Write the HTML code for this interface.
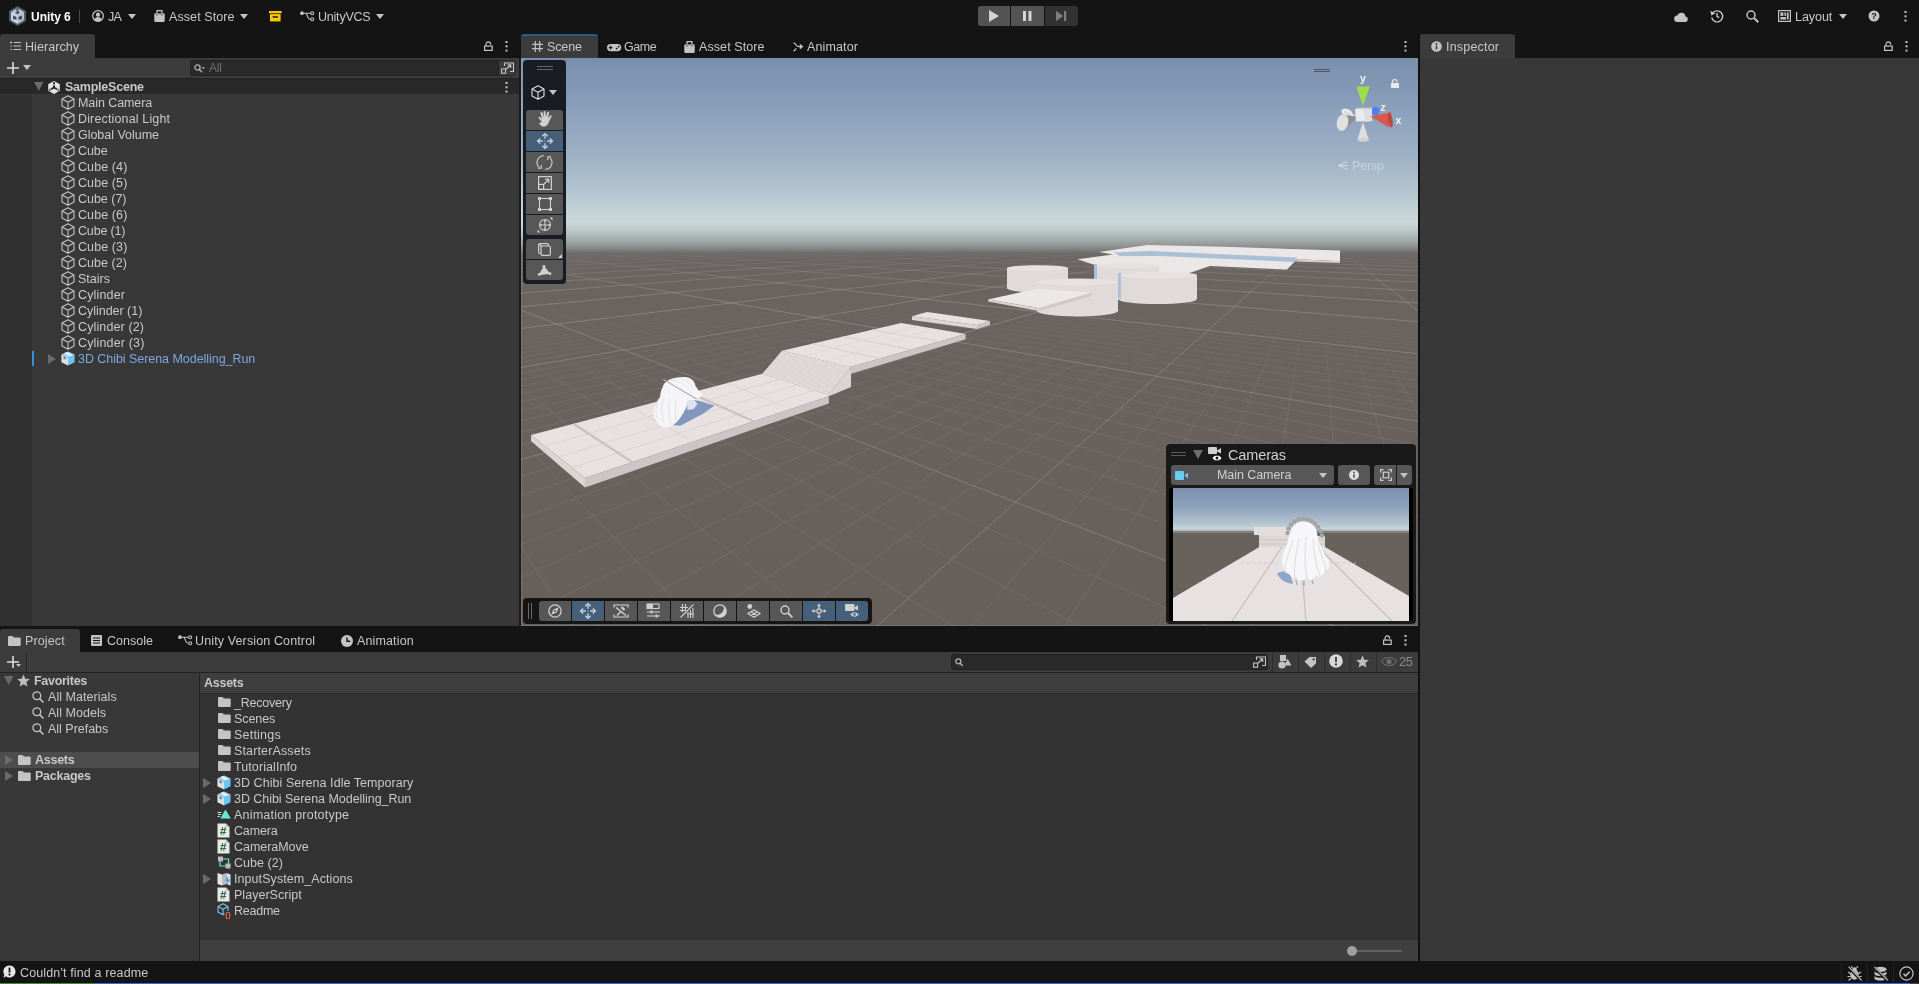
<!DOCTYPE html>
<html><head><meta charset="utf-8"><title>Unity 6</title><style>
*{box-sizing:border-box}
html,body{margin:0;padding:0}
body{width:1919px;height:984px;background:#141414;position:relative;overflow:hidden;font-family:"Liberation Sans",sans-serif;font-size:12.5px;color:#c8c8c8;}
.a{position:absolute}
.t{position:absolute;white-space:nowrap;line-height:16px;height:16px;will-change:transform}
.b{font-weight:bold}
svg{position:absolute;overflow:visible;will-change:transform}
.tab{position:absolute;background:#3c3c3c;border-radius:3px 3px 0 0}
.row{position:absolute;left:0;height:16px}
.btn{position:absolute;background:#585858;border-radius:2px}
.on{background:#46607c}
</style></head><body>
<div class="a" style="left:0px;top:0px;width:1919px;height:34px;background:#141414;"></div>
<svg style="left:9px;top:6px" width="17" height="20" viewBox="0 0 17 20" ><polygon points="8.500,0 17,5 17,15 8.500,20 0,15 0,5" fill="#4f5b68"/><polygon points="8.500,2.300 15,6.100 15,13.900 8.500,17.700 2,13.900 2,6.100" fill="#c3cad6"/><polygon points="8.500,10 15,6.300 15,13.900 8.500,17.700" fill="#b4bcc9"/><polygon points="8.500,10 2,6.300 2,13.900 8.500,17.700" fill="#cdd3de"/><path d="M7.500 2.400h2v3.600h1.700l-2.700 2.600l-2.700-2.600h1.700z" fill="#46525f"/><path d="M4.200 9.400l3.200 1.500v2.800l-1.800-.8l-1.400 1.200z" fill="#36414d"/><path d="M12.800 9.400l-3.200 1.500v2.800l1.800-.8l1.400 1.200z" fill="#36414d"/></svg>
<div class="t b" style="left:30.7px;top:9px;font-size:12px;letter-spacing:-0.036px;color:#fff">Unity 6</div>
<div class="a" style="left:79px;top:10px;width:1px;height:13px;background:#4a4a4a;"></div>
<svg style="left:92px;top:10px" width="12" height="12" viewBox="0 0 12 12" ><circle cx="6" cy="6" r="5.300" fill="none" stroke="#c4c4c4" stroke-width="1.300"/><circle cx="6" cy="4.700" r="2.100" fill="#c4c4c4"/><path d="M2.300 9.700c.7-2 2.100-2.700 3.700-2.700s3 .7 3.700 2.700c-1 1.100-2.300 1.700-3.700 1.700s-2.700-.6-3.700-1.700z" fill="#c4c4c4"/></svg>
<div class="t " style="left:108px;top:9px;font-size:12.5px;letter-spacing:-0.794px;">JA</div>
<svg style="left:128px;top:14px" width="8" height="5" viewBox="0 0 8 5" ><polygon points="0,0 8,0 4,5" fill="#c4c4c4"/></svg>
<svg style="left:153.5px;top:10px" width="11" height="12" viewBox="0 0 11 12" ><path d="M0.300 3.600h10.400v7.200a1.200 1.200 0 0 1-1.200 1.200h-8a1.200 1.200 0 0 1-1.200-1.200z" fill="#c4c4c4"/><path d="M3 4v-3.400h5v3.400" fill="none" stroke="#c4c4c4" stroke-width="1.200"/><path d="M2.300 4.300l.8 1l.8-1M7.100 4.300l.8 1l.8-1" fill="none" stroke="#141414" stroke-width=".7"/></svg>
<div class="t " style="left:169px;top:9px;font-size:12.5px;letter-spacing:0.087px;">Asset Store</div>
<svg style="left:240px;top:14px" width="8" height="5" viewBox="0 0 8 5" ><polygon points="0,0 8,0 4,5" fill="#c4c4c4"/></svg>
<svg style="left:268.8px;top:10.9px" width="13" height="11" viewBox="0 0 13 11" ><rect x="0" y="0" width="12.600" height="2.300" fill="#ffc800"/><rect x="1" y="3.100" width="10.600" height="7.300" fill="#ffc800"/><path d="M3.500 5.300h5.600v.5c0 .5-.4.900-.9.900h-3.800c-.5 0-.9-.4-.9-.9z" fill="#141414"/></svg>
<svg style="left:299.8px;top:10.9px" width="15" height="11" viewBox="0 0 15 11" ><circle cx="2" cy="2.200" r="1.900" fill="#c4c4c4"/><circle cx="12.200" cy="2.200" r="1.500" fill="none" stroke="#c4c4c4" stroke-width="1.100"/><circle cx="12.200" cy="8.300" r="1.500" fill="none" stroke="#c4c4c4" stroke-width="1.100"/><path d="M3.500 2.200h7.200M5.500 2.200c2.200 0 1.200 6.100 5.200 6.100" fill="none" stroke="#c4c4c4" stroke-width="1.100"/></svg>
<div class="t " style="left:317.5px;top:9px;font-size:12.5px;letter-spacing:-0.212px;">UnityVCS</div>
<svg style="left:376px;top:14px" width="8" height="5" viewBox="0 0 8 5" ><polygon points="0,0 8,0 4,5" fill="#c4c4c4"/></svg>
<div class="a" style="left:978px;top:6px;width:32px;height:20px;background:#535353;border-radius:3px 0 0 3px"></div>
<div class="a" style="left:1011px;top:6px;width:33px;height:20px;background:#535353;"></div>
<div class="a" style="left:1045px;top:6px;width:33px;height:20px;background:#323232;border-radius:0 3px 3px 0"></div>
<svg style="left:989px;top:10px" width="11" height="12" viewBox="0 0 11 12" ><polygon points="0,0 10,6 0,12" fill="#d2d2d2"/></svg>
<svg style="left:1023px;top:11px" width="9" height="10" viewBox="0 0 9 10" ><rect x="0" y="0" width="3" height="10" fill="#d2d2d2"/><rect x="5.500" y="0" width="3" height="10" fill="#d2d2d2"/></svg>
<svg style="left:1056px;top:11px" width="11" height="10" viewBox="0 0 11 10" ><polygon points="0,0 7.500,5 0,10" fill="#7e7e7e"/><rect x="8" y="0" width="2.200" height="10" fill="#7e7e7e"/></svg>
<svg style="left:1673.5px;top:11.5px" width="15" height="10" viewBox="0 0 15 10" ><path d="M3.500 10a3.200 3.200 0 0 1-.3-6.400a4.300 4.300 0 0 1 8.300.9a2.800 2.800 0 0 1 .2 5.500z" fill="#c4c4c4"/></svg>
<svg style="left:1710px;top:9px" width="14" height="14" viewBox="0 0 14 14" ><path d="M2.600 4.200a5.500 5.500 0 1 1-.9 4.300" fill="none" stroke="#c4c4c4" stroke-width="1.400"/><polygon points="0.400,1.800 1.200,6.400 5.300,4.600" fill="#c4c4c4"/><path d="M7 4v3.300l2.200 1.300" fill="none" stroke="#c4c4c4" stroke-width="1.400"/></svg>
<svg style="left:1746px;top:10px" width="13" height="13" viewBox="0 0 13 13" ><circle cx="5" cy="5" r="4" fill="none" stroke="#c4c4c4" stroke-width="1.500"/><path d="M8 8l4.300 4.300" stroke="#c4c4c4" stroke-width="2"/></svg>
<svg style="left:1778px;top:10px" width="13" height="12" viewBox="0 0 13 12" ><rect x=".6" y=".6" width="11.800" height="10.800" fill="none" stroke="#c4c4c4" stroke-width="1.200"/><rect x="2.400" y="2.400" width="3" height="3.500" fill="#c4c4c4"/><rect x="6.400" y="2.400" width="1.500" height="3.500" fill="#c4c4c4"/><rect x="8.800" y="2.400" width="1.800" height="7.200" fill="#c4c4c4"/><rect x="2.400" y="7" width="5.500" height="2.600" fill="#c4c4c4"/></svg>
<div class="t " style="left:1795.4px;top:9px;font-size:12.5px;letter-spacing:-0.046px;">Layout</div>
<svg style="left:1839px;top:14px" width="8" height="5" viewBox="0 0 8 5" ><polygon points="0,0 8,0 4,5" fill="#c4c4c4"/></svg>
<svg style="left:1868px;top:10px" width="12" height="12" viewBox="0 0 12 12" ><circle cx="6" cy="6" r="5.500" fill="#c4c4c4"/><text x="6" y="9.300" font-size="9" font-weight="bold" text-anchor="middle" fill="#141414" font-family="Liberation Sans,sans-serif">?</text></svg>
<svg style="left:1904px;top:11px" width="3" height="11" viewBox="0 0 3 11" ><rect x=".5" y="0" width="2" height="2" fill="#c4c4c4"/><rect x=".5" y="4.300" width="2" height="2" fill="#c4c4c4"/><rect x=".5" y="8.600" width="2" height="2" fill="#c4c4c4"/></svg>
<div class="a" style="left:0px;top:34px;width:95px;height:24px;background:#3c3c3c;border-radius:3px 3px 0 0"></div>
<svg style="left:10px;top:41px" width="11" height="10" viewBox="0 0 11 10" ><path d="M3.500 1.500h7.500M3.500 5h7.500M3.500 8.500h7.500" stroke="#c4c4c4" stroke-width="1.200"/><path d="M0 1.500h2M1 0.500v2M0.500 5h1.500M0.500 8.500h1.500" stroke="#c4c4c4" stroke-width="1"/></svg>
<div class="t " style="left:25px;top:38.5px;font-size:12.5px;letter-spacing:0.062px;">Hierarchy</div>
<svg style="left:484px;top:41px" width="9" height="10" viewBox="0 0 9 10" ><rect x=".6" y="5.100" width="7.600" height="4.300" fill="none" stroke="#c4c4c4" stroke-width="1.200"/><path d="M2 5v-1.800a2.300 2.300 0 0 1 4.600 0v.5" fill="none" stroke="#c4c4c4" stroke-width="1.200"/></svg>
<svg style="left:505px;top:41px" width="3" height="11" viewBox="0 0 3 11" ><rect x=".5" y="0" width="2" height="2" fill="#c4c4c4"/><rect x=".5" y="4.300" width="2" height="2" fill="#c4c4c4"/><rect x=".5" y="8.600" width="2" height="2" fill="#c4c4c4"/></svg>
<div class="a" style="left:0px;top:58px;width:519px;height:20px;background:#3c3c3c;"></div>
<svg style="left:7px;top:62px" width="12" height="12" viewBox="0 0 12 12" ><path d="M6 0v12M0 6h12" stroke="#dcdcdc" stroke-width="1.600"/></svg>
<svg style="left:23px;top:65px" width="8" height="5" viewBox="0 0 8 5" ><polygon points="0,0 8,0 4,5" fill="#c4c4c4"/></svg>
<div class="a" style="left:190px;top:60px;width:309px;height:16px;background:#2a2a2a;border:1px solid #212121;border-radius:3px 0 0 3px"></div>
<svg style="left:194px;top:64px" width="11" height="9" viewBox="0 0 11 9" ><circle cx="3.500" cy="3.500" r="2.600" fill="none" stroke="#b0b0b0" stroke-width="1.300"/><path d="M5.400 5.400l2.600 2.800" stroke="#b0b0b0" stroke-width="1.400"/><polygon points="7.500,3.200 11,3.200 9.200,5.200" fill="#b0b0b0"/></svg>
<div class="t " style="left:209px;top:60px;font-size:12px;letter-spacing:-0.172px;color:#6e6e6e">All</div>
<div class="a" style="left:499px;top:60px;width:17px;height:16px;background:#3c3c3c;border:1px solid #2a2a2a;border-left:none;border-radius:0 3px 3px 0"></div>
<svg style="left:501px;top:62px" width="13" height="12" viewBox="0 0 13 12" ><path d="M3.500 4v-3h9v8.500h-3.500" fill="none" stroke="#c4c4c4" stroke-width="1.100"/><rect x=".6" y="7" width="4" height="4.200" fill="none" stroke="#c4c4c4" stroke-width="1.100"/><path d="M4.500 7.500l5-4.500M6.500 2.800h3.200v3.200" fill="none" stroke="#c4c4c4" stroke-width="1.100"/></svg>
<div class="a" style="left:0px;top:78px;width:519px;height:1px;background:#232323;"></div>
<div class="a" style="left:0px;top:79px;width:519px;height:15px;background:#282828;"></div>
<div class="a" style="left:0px;top:94px;width:519px;height:1px;background:#3a3a3a;"></div>
<div class="a" style="left:0px;top:95px;width:32px;height:531px;background:#303030;"></div>
<div class="a" style="left:32px;top:95px;width:487px;height:531px;background:#383838;"></div>
<svg style="left:34px;top:82px" width="10" height="9" viewBox="0 0 10 9" ><polygon points="0,0 9.500,0 4.750,9" fill="#6a6a6a"/></svg>
<svg style="left:48px;top:80.5px" width="12" height="13" viewBox="0 0 12 13" ><polygon points="6,0 11.800,3.300 11.800,9.700 6,13 0.200,9.700 0.200,3.300" fill="#e6e6e6"/><path d="M6 6.500V1.200M6 6.500L1.300 9.200M6 6.500l4.700 2.700" stroke="#282828" stroke-width="2" fill="none"/><path d="M4.600 3.300l1.400.8l1.400-.8M2 6.400v1.600l1.400.8M10 6.400v1.600l-1.400.8" stroke="#e6e6e6" stroke-width="1" fill="none"/></svg>
<div class="t b" style="left:65px;top:78.5px;font-size:12.5px;letter-spacing:-0.230px;">SampleScene</div>
<svg style="left:505px;top:82px" width="3" height="11" viewBox="0 0 3 11" ><rect x=".5" y="0" width="2" height="2" fill="#c4c4c4"/><rect x=".5" y="4.300" width="2" height="2" fill="#c4c4c4"/><rect x=".5" y="8.600" width="2" height="2" fill="#c4c4c4"/></svg>
<svg style="left:61px;top:95.0px" width="14" height="15" viewBox="0 0 14 15" ><path d="M7 .8l6 3.200v7l-6 3.200l-6-3.200v-7z M1 4l6 3.200l6-3.200M7 7.200v7" fill="none" stroke="#c4c4c4" stroke-width="1.100" stroke-linejoin="round"/></svg>
<div class="t " style="left:78px;top:94.5px;font-size:12.5px;letter-spacing:-0.073px;">Main Camera</div>
<svg style="left:61px;top:111.0px" width="14" height="15" viewBox="0 0 14 15" ><path d="M7 .8l6 3.200v7l-6 3.200l-6-3.200v-7z M1 4l6 3.200l6-3.200M7 7.200v7" fill="none" stroke="#c4c4c4" stroke-width="1.100" stroke-linejoin="round"/></svg>
<div class="t " style="left:78px;top:110.5px;font-size:12.5px;letter-spacing:0.147px;">Directional Light</div>
<svg style="left:61px;top:127.0px" width="14" height="15" viewBox="0 0 14 15" ><path d="M7 .8l6 3.200v7l-6 3.200l-6-3.200v-7z M1 4l6 3.200l6-3.200M7 7.200v7" fill="none" stroke="#c4c4c4" stroke-width="1.100" stroke-linejoin="round"/></svg>
<div class="t " style="left:78px;top:126.5px;font-size:12.5px;letter-spacing:-0.026px;">Global Volume</div>
<svg style="left:61px;top:143.0px" width="14" height="15" viewBox="0 0 14 15" ><path d="M7 .8l6 3.200v7l-6 3.200l-6-3.200v-7z M1 4l6 3.200l6-3.200M7 7.200v7" fill="none" stroke="#c4c4c4" stroke-width="1.100" stroke-linejoin="round"/></svg>
<div class="t " style="left:78px;top:142.5px;font-size:12.5px;letter-spacing:-0.064px;">Cube</div>
<svg style="left:61px;top:159.0px" width="14" height="15" viewBox="0 0 14 15" ><path d="M7 .8l6 3.200v7l-6 3.200l-6-3.200v-7z M1 4l6 3.200l6-3.200M7 7.200v7" fill="none" stroke="#c4c4c4" stroke-width="1.100" stroke-linejoin="round"/></svg>
<div class="t " style="left:78px;top:158.5px;font-size:12.5px;letter-spacing:0.094px;">Cube (4)</div>
<svg style="left:61px;top:175.0px" width="14" height="15" viewBox="0 0 14 15" ><path d="M7 .8l6 3.200v7l-6 3.200l-6-3.200v-7z M1 4l6 3.200l6-3.200M7 7.200v7" fill="none" stroke="#c4c4c4" stroke-width="1.100" stroke-linejoin="round"/></svg>
<div class="t " style="left:78px;top:174.5px;font-size:12.5px;letter-spacing:0.094px;">Cube (5)</div>
<svg style="left:61px;top:191.0px" width="14" height="15" viewBox="0 0 14 15" ><path d="M7 .8l6 3.200v7l-6 3.200l-6-3.200v-7z M1 4l6 3.200l6-3.200M7 7.200v7" fill="none" stroke="#c4c4c4" stroke-width="1.100" stroke-linejoin="round"/></svg>
<div class="t " style="left:78px;top:190.5px;font-size:12.5px;letter-spacing:-0.020px;">Cube (7)</div>
<svg style="left:61px;top:207.0px" width="14" height="15" viewBox="0 0 14 15" ><path d="M7 .8l6 3.200v7l-6 3.200l-6-3.200v-7z M1 4l6 3.200l6-3.200M7 7.200v7" fill="none" stroke="#c4c4c4" stroke-width="1.100" stroke-linejoin="round"/></svg>
<div class="t " style="left:78px;top:206.5px;font-size:12.5px;letter-spacing:0.094px;">Cube (6)</div>
<svg style="left:61px;top:223.0px" width="14" height="15" viewBox="0 0 14 15" ><path d="M7 .8l6 3.200v7l-6 3.200l-6-3.200v-7z M1 4l6 3.200l6-3.200M7 7.200v7" fill="none" stroke="#c4c4c4" stroke-width="1.100" stroke-linejoin="round"/></svg>
<div class="t " style="left:78px;top:222.5px;font-size:12.5px;letter-spacing:-0.163px;">Cube (1)</div>
<svg style="left:61px;top:239.0px" width="14" height="15" viewBox="0 0 14 15" ><path d="M7 .8l6 3.200v7l-6 3.200l-6-3.200v-7z M1 4l6 3.200l6-3.200M7 7.200v7" fill="none" stroke="#c4c4c4" stroke-width="1.100" stroke-linejoin="round"/></svg>
<div class="t " style="left:78px;top:238.5px;font-size:12.5px;letter-spacing:0.094px;">Cube (3)</div>
<svg style="left:61px;top:255.0px" width="14" height="15" viewBox="0 0 14 15" ><path d="M7 .8l6 3.200v7l-6 3.200l-6-3.200v-7z M1 4l6 3.200l6-3.200M7 7.200v7" fill="none" stroke="#c4c4c4" stroke-width="1.100" stroke-linejoin="round"/></svg>
<div class="t " style="left:78px;top:254.5px;font-size:12.5px;letter-spacing:0.051px;">Cube (2)</div>
<svg style="left:61px;top:271.0px" width="14" height="15" viewBox="0 0 14 15" ><path d="M7 .8l6 3.200v7l-6 3.200l-6-3.200v-7z M1 4l6 3.200l6-3.200M7 7.200v7" fill="none" stroke="#c4c4c4" stroke-width="1.100" stroke-linejoin="round"/></svg>
<div class="t " style="left:78px;top:270.5px;font-size:12.5px;letter-spacing:0.009px;">Stairs</div>
<svg style="left:61px;top:287.0px" width="14" height="15" viewBox="0 0 14 15" ><path d="M7 .8l6 3.200v7l-6 3.200l-6-3.200v-7z M1 4l6 3.200l6-3.200M7 7.200v7" fill="none" stroke="#c4c4c4" stroke-width="1.100" stroke-linejoin="round"/></svg>
<div class="t " style="left:78px;top:286.5px;font-size:12.5px;letter-spacing:0.163px;">Cylinder</div>
<svg style="left:61px;top:303.0px" width="14" height="15" viewBox="0 0 14 15" ><path d="M7 .8l6 3.200v7l-6 3.200l-6-3.200v-7z M1 4l6 3.200l6-3.200M7 7.200v7" fill="none" stroke="#c4c4c4" stroke-width="1.100" stroke-linejoin="round"/></svg>
<div class="t " style="left:78px;top:302.5px;font-size:12.5px;letter-spacing:-0.028px;">Cylinder (1)</div>
<svg style="left:61px;top:319.0px" width="14" height="15" viewBox="0 0 14 15" ><path d="M7 .8l6 3.200v7l-6 3.200l-6-3.200v-7z M1 4l6 3.200l6-3.200M7 7.200v7" fill="none" stroke="#c4c4c4" stroke-width="1.100" stroke-linejoin="round"/></svg>
<div class="t " style="left:78px;top:318.5px;font-size:12.5px;letter-spacing:0.126px;">Cylinder (2)</div>
<svg style="left:61px;top:335.0px" width="14" height="15" viewBox="0 0 14 15" ><path d="M7 .8l6 3.200v7l-6 3.200l-6-3.200v-7z M1 4l6 3.200l6-3.200M7 7.200v7" fill="none" stroke="#c4c4c4" stroke-width="1.100" stroke-linejoin="round"/></svg>
<div class="t " style="left:78px;top:334.5px;font-size:12.5px;letter-spacing:0.154px;">Cylinder (3)</div>
<div class="a" style="left:32px;top:351px;width:2px;height:15px;background:#3a8fd6;"></div>
<svg style="left:48px;top:353.5px" width="8" height="10" viewBox="0 0 8 10" ><polygon points="0,0 8,5 0,10" fill="#6a6a6a"/></svg>
<svg style="left:61px;top:351.0px" width="14" height="15" viewBox="0 0 14 15" ><polygon points="7,0.500 13.600,3.600 7,6.900 0.400,3.600" fill="#9bdcfb"/><polygon points="3.300,2.100 5.300,1.200 11.900,4.500 9.900,5.500" fill="#f4f8fb"/><polygon points="0.400,3.600 7,6.900 7,14.600 0.400,11.200" fill="#dde1e5"/><polygon points="13.600,3.600 7,6.900 7,14.600 13.600,11.200" fill="#6cc6f4"/><polygon points="2.600,5.200 4.600,6.200 4.600,9 3.600,8 2.600,8.300" fill="#6d7379"/></svg>
<div class="t " style="left:78px;top:350.5px;font-size:12.5px;letter-spacing:-0.046px;color:#7ba7e1;">3D Chibi Serena Modelling_Run</div>
<div class="a" style="left:519px;top:58px;width:2px;height:568px;background:#191919;"></div>
<div class="a" style="left:521px;top:34px;width:77px;height:24px;background:#3c3c3c;border-radius:3px 3px 0 0;border-top:2px solid #2c5d87"></div>
<svg style="left:532px;top:41px" width="11" height="11" viewBox="0 0 11 11" ><path d="M3.300 0v11M7.700 0v11M0 3.300h11M0 7.700h11" stroke="#c4c4c4" stroke-width="1.200"/></svg>
<div class="t " style="left:547px;top:38.5px;font-size:12.5px;letter-spacing:-0.113px;">Scene</div>
<svg style="left:607px;top:43.6px" width="15" height="8" viewBox="0 0 15 8" ><rect x="0" y="0" width="14.200" height="7.200" rx="3.600" fill="#c4c4c4"/><path d="M3.600 1.800v3.600M1.800 3.600h3.600" stroke="#141414" stroke-width="1.100"/><circle cx="9.600" cy="4.600" r=".9" fill="#141414"/><circle cx="11.600" cy="2.700" r=".9" fill="#141414"/></svg>
<div class="t " style="left:624px;top:38.5px;font-size:12.5px;letter-spacing:-0.416px;">Game</div>
<svg style="left:683.6px;top:41.2px" width="11" height="12" viewBox="0 0 11 12" ><path d="M0.300 3.600h10.400v7.200a1.200 1.200 0 0 1-1.200 1.200h-8a1.200 1.200 0 0 1-1.200-1.200z" fill="#c4c4c4"/><path d="M3 4v-3.400h5v3.400" fill="none" stroke="#c4c4c4" stroke-width="1.200"/><path d="M2.300 4.300l.8 1l.8-1M7.100 4.300l.8 1l.8-1" fill="none" stroke="#141414" stroke-width=".7"/></svg>
<div class="t " style="left:699px;top:38.5px;font-size:12.5px;letter-spacing:0.087px;">Asset Store</div>
<svg style="left:792.5px;top:41.8px" width="11" height="10" viewBox="0 0 11 10" ><path d="M0.500 0.800c1.200 0 2 1 2.800 2.400s1.500 1.400 2.700 1.400h3M0.500 8.800c1.200 0 2-1 2.800-2.400" fill="none" stroke="#c4c4c4" stroke-width="1.200"/><polygon points="6.800,1.800 10.500,4.600 6.800,7.400" fill="#c4c4c4"/></svg>
<div class="t " style="left:807px;top:38.5px;font-size:12.5px;letter-spacing:0.138px;">Animator</div>
<svg style="left:1404px;top:41px" width="3" height="11" viewBox="0 0 3 11" ><rect x=".5" y="0" width="2" height="2" fill="#c4c4c4"/><rect x=".5" y="4.300" width="2" height="2" fill="#c4c4c4"/><rect x=".5" y="8.600" width="2" height="2" fill="#c4c4c4"/></svg>
<svg style="left:521px;top:58px" width="897" height="568" viewBox="521 58 897 568"><defs><linearGradient id="sky" gradientUnits="userSpaceOnUse" x1="0" y1="58" x2="0" y2="262"><stop offset="0.0000" stop-color="#7a8fae"/><stop offset="0.1569" stop-color="#8398b4"/><stop offset="0.3039" stop-color="#8fa4bd"/><stop offset="0.4804" stop-color="#9db1c6"/><stop offset="0.6618" stop-color="#b5c5d0"/><stop offset="0.7451" stop-color="#c3d1d6"/><stop offset="0.8039" stop-color="#cbd8d9"/><stop offset="0.8529" stop-color="#b9c4c4"/><stop offset="0.8922" stop-color="#a3abab"/><stop offset="0.9216" stop-color="#8e9393"/><stop offset="0.9412" stop-color="#7d7e7d"/><stop offset="0.9559" stop-color="#6e6a69"/><stop offset="0.9804" stop-color="#6b6664"/><stop offset="1.0000" stop-color="#6a6562"/></linearGradient><linearGradient id="gnd" gradientUnits="userSpaceOnUse" x1="0" y1="262" x2="0" y2="626"><stop offset="0" stop-color="#6a6562"/><stop offset=".5" stop-color="#68615c"/><stop offset="1" stop-color="#67605a"/></linearGradient><linearGradient id="gfade" gradientUnits="userSpaceOnUse" x1="0" y1="295" x2="0" y2="420"><stop offset="0" stop-color="#fff" stop-opacity="0"/><stop offset=".5" stop-color="#fff" stop-opacity=".6"/><stop offset="1" stop-color="#fff" stop-opacity="1"/></linearGradient><linearGradient id="gfade2" gradientUnits="userSpaceOnUse" x1="0" y1="250" x2="0" y2="300"><stop offset="0" stop-color="#fff" stop-opacity="0"/><stop offset=".4" stop-color="#fff" stop-opacity=".55"/><stop offset="1" stop-color="#fff" stop-opacity="1"/></linearGradient><mask id="gm" maskUnits="userSpaceOnUse" x="521" y="58" width="897" height="568"><rect x="521" y="58" width="897" height="568" fill="url(#gfade)"/></mask><mask id="gm2" maskUnits="userSpaceOnUse" x="521" y="58" width="897" height="568"><rect x="521" y="58" width="897" height="568" fill="url(#gfade2)"/></mask><clipPath id="sc"><rect x="521" y="58" width="897" height="568"/></clipPath></defs><g clip-path="url(#sc)"><rect x="521" y="58" width="897" height="204" fill="url(#sky)"/><rect x="521" y="262" width="897" height="364" fill="url(#gnd)"/><g mask="url(#gm)" fill="none"><path d="M129048.3 7447L1415.4 237.5M127329.3 7447L1413.9 237.5M125610.2 7447L1412.5 237.5M123891.2 7447L1411.1 237.5M122172.1 7447L1409.6 237.5M120453.1 7447L1408.2 237.5M118734 7447L1406.8 237.5M117015 7447L1405.4 237.4M115295.9 7447L1404 237.4M111857.8 7447L1401.2 237.4M110138.7 7447L1399.8 237.4M108419.7 7447L1398.4 237.4M106700.6 7447L1397 237.4M104981.6 7447L1395.6 237.4M103262.5 7447L1394.2 237.4M101543.5 7447L1392.8 237.4M99824.4 7447L1391.4 237.4M98105.4 7447L1390.1 237.4M94667.2 7447L1387.3 237.4M92948.2 7447L1386 237.4M91229.1 7447L1384.6 237.3M89510.1 7447L1383.3 237.3M87791 7447L1381.9 237.3M86072 7447L1380.5 237.3M84352.9 7447L1379.2 237.3M82633.9 7447L1377.9 237.3M80914.8 7447L1376.5 237.3M77476.7 7447L1373.9 237.3M75757.6 7447L1372.5 237.3M74038.6 7447L1371.2 237.3M72319.5 7447L1369.9 237.3M70600.5 7447L1368.6 237.3M68881.4 7447L1367.2 237.3M67162.4 7447L1365.9 237.3M65443.3 7447L1364.6 237.2M63724.3 7447L1363.3 237.2M60286.1 7447L1360.7 237.2M58567.1 7447L1359.4 237.2M56848 7447L1358.1 237.2M55129 7447L1356.8 237.2M53409.9 7447L1355.5 237.2M51690.9 7447L1354.3 237.2M49971.8 7447L1353 237.2M48252.8 7447L1351.7 237.2M46533.7 7447L1350.4 237.2M43095.6 7447L1347.9 237.2M41376.5 7447L1346.6 237.2M39657.5 7447L1345.4 237.1M37938.4 7447L1344.1 237.1M36219.4 7447L1342.8 237.1M34500.3 7447L1341.6 237.1M32781.3 7447L1340.3 237.1M31062.2 7447L1339.1 237.1M29343.2 7447L1337.9 237.1M25905 7447L1335.4 237.1M24186 7447L1334.1 237.1M22466.9 7447L1332.9 237.1M20747.9 7447L1331.7 237.1M19028.8 7447L1330.5 237.1M17309.8 7447L1329.2 237.1M15590.7 7447L1328 237.1M13871.7 7447L1326.8 237.1M12152.6 7447L1325.6 237M8714.5 7447L1323.2 237M6995.4 7447L1322 237M5276.4 7447L1320.8 237M3557.3 7447L1319.6 237M1838.3 7447L1318.4 237M119.2 7447L1317.2 237M-1599.8 7447L1316 237M-3318.9 7447L1314.8 237M-5037.9 7447L1313.6 237M-2189.3 2815.7L1311.2 237M-1232 1830L1310.1 237M-803.4 1388.7L1308.9 237M-560.3 1138.4L1307.7 237M-403.7 977.2L1306.6 237M-294.4 864.6L1305.4 236.9M-213.8 781.6L1304.2 236.9M-151.9 717.9L1303.1 236.9M-102.8 667.4L1301.9 236.9M-30.1 592.4L1299.6 236.9M-2.3 563.9L1298.5 236.9M21.3 539.5L1297.3 236.9M41.8 518.5L1296.2 236.9M59.6 500.1L1295 236.9M75.3 484L1293.9 236.9M89.1 469.7L1292.8 236.9M101.5 456.9L1291.6 236.9M112.7 445.5L1290.5 236.9M131.9 425.7L1288.2 236.9M140.2 417.2L1287.1 236.9M147.8 409.3L1286 236.9M154.8 402.1L1284.9 236.8M161.2 395.5L1283.8 236.8M167.2 389.3L1282.6 236.8M172.7 383.6L1281.5 236.8M177.9 378.3L1280.4 236.8M182.7 373.4L1279.3 236.8M191.4 364.5L1277.1 236.8M195.3 360.4L1276 236.8M199 356.6L1274.9 236.8M202.5 353L1273.8 236.8M205.8 349.6L1272.8 236.8M208.9 346.4L1271.7 236.8M211.9 343.3L1270.6 236.8M214.7 340.5L1269.5 236.8M217.3 337.7L1268.4 236.8M222.3 332.6L1266.3 236.8M224.6 330.3L1265.2 236.7M226.7 328L1264.1 236.7M228.8 325.9L1263.1 236.7M230.8 323.8L1262 236.7M232.7 321.8L1260.9 236.7M234.6 320L1259.9 236.7M236.3 318.1L1258.8 236.7M238 316.4L1257.8 236.7M241.2 313.1L1255.7 236.7M242.7 311.6L1254.6 236.7M244.1 310.1L1253.6 236.7M245.5 308.7L1252.5 236.7M246.9 307.3L1251.5 236.7M248.2 306L1250.4 236.7M249.4 304.7L1249.4 236.7M250.6 303.5L1248.4 236.7M251.8 302.3L1247.3 236.7M254 300L1245.3 236.6M255 298.9L1244.3 236.6M256.1 297.8L1243.2 236.6M257 296.8L1242.2 236.6M258 295.8L1241.2 236.6M258.9 294.9L1240.2 236.6M259.8 293.9L1239.2 236.6M260.7 293L1238.2 236.6M261.6 292.2L1237.1 236.6M263.2 290.5L1235.1 236.6M264 289.7L1234.1 236.6M264.7 288.9L1233.1 236.6M265.5 288.1L1232.1 236.6M266.2 287.4L1231.1 236.6M266.9 286.7L1230.1 236.6M267.6 286L1229.1 236.6M268.3 285.3L1228.2 236.6M268.9 284.6L1227.2 236.6M270.2 283.3L1225.2 236.5M270.8 282.7L1224.2 236.5M271.4 282.1L1223.2 236.5M271.9 281.5L1222.3 236.5M272.5 280.9L1221.3 236.5M273 280.4L1220.3 236.5M273.6 279.8L1219.3 236.5M274.1 279.3L1218.4 236.5M274.6 278.7L1217.4 236.5M275.6 277.7L1215.5 236.5M276.1 277.2L1214.5 236.5M276.5 276.7L1213.6 236.5M277 276.3L1212.6 236.5M277.5 275.8L1211.7 236.5M277.9 275.4L1210.7 236.5M278.3 274.9L1209.8 236.5M278.8 274.5L1208.8 236.5M279.2 274L1207.9 236.5M280 273.2L1206 236.4M280.4 272.8L1205 236.4M280.7 272.4L1204.1 236.4M281.1 272L1203.2 236.4M281.5 271.7L1202.2 236.4M281.8 271.3L1201.3 236.4M282.2 270.9L1200.4 236.4M282.5 270.6L1199.4 236.4M282.9 270.2L1198.5 236.4M283.6 269.5L1196.7 236.4M283.9 269.2L1195.7 236.4M284.2 268.9L1194.8 236.4M284.5 268.5L1193.9 236.4M284.8 268.2L1193 236.4M285.1 267.9L1192.1 236.4M285.4 267.6L1191.2 236.4M285.7 267.3L1190.3 236.4M286 267L1189.4 236.4M286.6 266.4L1187.5 236.4M286.8 266.2L1186.6 236.4M287.1 265.9L1185.7 236.3M287.4 265.6L1184.9 236.3M287.6 265.3L1184 236.3M287.9 265.1L1183.1 236.3M288.1 264.8L1182.2 236.3M288.4 264.6L1181.3 236.3M288.6 264.3L1180.4 236.3M289.1 263.8L1178.6 236.3M289.3 263.6L1177.7 236.3M289.6 263.3L1176.9 236.3M289.8 263.1L1176 236.3M290 262.9L1175.1 236.3M290.2 262.7L1174.2 236.3M290.4 262.4L1173.4 236.3M290.7 262.2L1172.5 236.3M290.9 262L1171.6 236.3M-6687.1 7447L316.6 235.5M-2036.5 7447L318.9 235.5M288.9 7447L320 235.5M2614.2 7447L321.1 235.5M4939.6 7447L322.2 235.5M7264.9 7447L323.3 235.5M9590.2 7447L324.4 235.5M11915.6 7447L325.6 235.5M14240.9 7447L326.7 235.5M16566.3 7447L327.8 235.4M21216.9 7447L330 235.4M23542.3 7447L331.1 235.4M25867.6 7447L332.2 235.4M28193 7447L333.3 235.4M30518.3 7447L334.3 235.4M32843.6 7447L335.4 235.4M35169 7447L336.5 235.4M37494.3 7447L337.6 235.4M39819.7 7447L338.7 235.4M11088.4 1991.8L340.8 235.4M7547.9 1354.1L341.9 235.4M5890.9 1055.6L343 235.4M4930.1 882.6L344 235.4M4303 769.6L345.1 235.4M3861.4 690.1L346.2 235.4M3533.6 631.1L347.2 235.4M3280.7 585.5L348.3 235.4M3079.6 549.3L349.4 235.4M2780 495.3L351.5 235.4M2665.4 474.7L352.5 235.4M2567.5 457L353.6 235.4M2482.8 441.8L354.6 235.4M2408.9 428.5L355.6 235.4M2343.8 416.8L356.7 235.3M2286.1 406.4L357.7 235.3M2234.5 397.1L358.8 235.3M2188.1 388.7L359.8 235.3M2108.1 374.3L361.9 235.3M2073.4 368.1L362.9 235.3M2041.6 362.3L363.9 235.3M2012.4 357.1L364.9 235.3M1985.4 352.2L366 235.3M1960.5 347.7L367 235.3M1937.3 343.5L368 235.3M1915.8 339.7L369 235.3M1895.7 336.1L370 235.3M1859.3 329.5L372 235.3M1842.8 326.5L373 235.3M1827.3 323.7L374 235.3M1812.6 321.1L375 235.3M1798.8 318.6L376 235.3M1785.7 316.2L377 235.3M1773.3 314L378 235.3M1761.6 311.9L379 235.3M1750.4 309.9L380 235.3M1729.7 306.2L382 235.3M1720.1 304.4L383 235.3M1710.9 302.8L384 235.3M1702.1 301.2L384.9 235.3M1693.7 299.7L385.9 235.2M1685.7 298.2L386.9 235.2M1678 296.8L387.9 235.2M1670.6 295.5L388.8 235.2M1663.5 294.2L389.8 235.2M1650.2 291.8L391.7 235.2M1643.9 290.7L392.7 235.2M1637.8 289.6L393.7 235.2M1632 288.5L394.6 235.2M1626.3 287.5L395.6 235.2M1620.9 286.6L396.5 235.2M1615.7 285.6L397.5 235.2M1610.6 284.7L398.5 235.2M1605.7 283.8L399.4 235.2M1596.4 282.1L401.3 235.2M1591.9 281.3L402.2 235.2M1587.6 280.6L403.2 235.2M1583.5 279.8L404.1 235.2M1579.4 279.1L405.1 235.2M1575.5 278.4L406 235.2M1571.7 277.7L406.9 235.2M1568 277L407.9 235.2M1564.5 276.4L408.8 235.2M1557.6 275.2L410.7 235.2M1554.3 274.6L411.6 235.2M1551.1 274L412.5 235.2M1548 273.4L413.4 235.2M1544.9 272.9L414.3 235.1M1542 272.3L415.3 235.1M1539.1 271.8L416.2 235.1M1536.3 271.3L417.1 235.1M1533.6 270.8L418 235.1M1528.3 269.9L419.8 235.1M1525.7 269.4L420.7 235.1M1523.3 269L421.6 235.1M1520.8 268.5L422.5 235.1M1518.5 268.1L423.4 235.1M1516.2 267.7L424.3 235.1M1513.9 267.3L425.2 235.1M1511.7 266.9L426.1 235.1M1509.5 266.5L427 235.1M1505.4 265.7L428.8 235.1M1503.3 265.4L429.7 235.1M1501.4 265L430.6 235.1M1499.4 264.7L431.5 235.1M1497.5 264.3L432.4 235.1M1495.7 264L433.2 235.1M1493.9 263.7L434.1 235.1M1492.1 263.4L435 235.1M1490.3 263L435.9 235.1M1487 262.4L437.6 235.1M1485.3 262.1L438.5 235.1" stroke="#9b9690" stroke-opacity=".24" stroke-width="1"/></g><g mask="url(#gm2)" fill="none"><path d="M130767.4 7447L1416.8 237.5M113576.8 7447L1402.6 237.4M96386.3 7447L1388.7 237.4M79195.7 7447L1375.2 237.3M62005.2 7447L1362 237.2M44814.6 7447L1349.2 237.2M27624.1 7447L1336.6 237.1M10433.5 7447L1324.4 237M-6228.7 6975L1312.4 237M-63 626.4L1300.8 236.9M122.7 435.1L1289.4 236.9M187.2 368.8L1278.2 236.8M219.9 335.1L1267.3 236.8M239.6 314.7L1256.7 236.7M252.9 301.1L1246.3 236.7M262.4 291.3L1236.1 236.6M269.5 284L1226.2 236.5M275.1 278.2L1216.4 236.5M279.6 273.6L1206.9 236.5M283.2 269.9L1197.6 236.4M286.3 266.7L1188.5 236.4M288.9 264.1L1179.5 236.3M-4361.8 7447L317.7 235.5M18891.6 7447L328.9 235.4M23949.9 4308.3L339.8 235.4M2915.9 519.8L350.4 235.4M2146.2 381.2L360.8 235.3M1876.9 332.7L371 235.3M1739.8 308L381 235.3M1656.7 293L390.8 235.2M1601 283L400.4 235.2M1561 275.8L409.7 235.2M1530.9 270.3L418.9 235.1M1507.4 266.1L427.9 235.1M1488.6 262.7L436.7 235.1" stroke="#aaa6a1" stroke-opacity=".42" stroke-width="1"/></g><polygon points="1099,252 1147,244.9 1224,246.8 1340,250.4 1340,261.2 1297,259.3 1287,269.6 1210,266 1185,274.4 1120,272 1094,264.8 1077.5,259.3 1113,254.5" fill="#ebe7e6" /><polygon points="1113.5,252.6 1150,251 1297,257.6 1295,262 1160,256 1120,256" fill="#a9c0d6" /><polygon points="1297,259.3 1340,261.2 1340,263 1296,261.5" fill="#d5cfce" /><path d="M1094 266V282A32.5 4.2 0 0 0 1159 282V266z" fill="#e0dad9"/><ellipse cx="1126.5" cy="266" rx="32.5" ry="2.6" fill="#e7e2e1"/><polygon points="1094,264 1097,264 1097,282 1094,281" fill="#a9c0d6" /><path d="M1007 268V288A30.5 4.5 0 0 0 1068 288V268z" fill="#e0dad9"/><ellipse cx="1037.5" cy="268" rx="30.5" ry="2.8" fill="#e7e2e1"/><path d="M1118 275V299A39.5 5.1 0 0 0 1197 299V275z" fill="#e0dad9"/><ellipse cx="1157.5" cy="275" rx="39.5" ry="3.2" fill="#e7e2e1"/><polygon points="1118,273 1121,273 1121,299 1118,298" fill="#a9c0d6" /><path d="M1037 282V311A40.5 5.4 0 0 0 1118 311V282z" fill="#e0dad9"/><ellipse cx="1077.5" cy="282" rx="40.5" ry="3.4" fill="#e7e2e1"/><polygon points="988,299.5 1037,288.8 1092,292.4 1039,308" fill="#ece8e7" /><polygon points="988,299.5 1039,308 1039,311 988,301.5" fill="#d8d2d1" /><polygon points="1039,308 1092,292.4 1092,296 1039,311" fill="#cfc9c8" /><polygon points="912,316.3 927,311.9 990,321 977,325" fill="#e7e2e1" /><polygon points="912,316.3 977,325 977,329 912,320" fill="#dad4d3" /><polygon points="977,325 990,321 990,325 977,329" fill="#cbc5c5" /><polygon points="782,350.8 901.2,323 965.6,333.9 850.4,367" fill="#e7e2e1" /><polygon points="850.4,367 965.6,333.9 965.6,339.3 850.4,374" fill="#cbc5c5" /><path d="M812 343.800L880.500 358.500M843 336.500L911 349.500M872 329.800L939.500 341.500" stroke="#d6cfce" stroke-width="1" fill="none"/><path d="M805 355.500L917.500 326M827 361L934 328.800" stroke="#ddd7d6" stroke-width=".8" fill="none"/><polygon points="762.4,373.8 782,350.8 850.4,367 828.8,394.9" fill="#e4dedd" /><path d="M763.8 372.2L830.3 392.9M765.2 370.5L831.9 390.9M766.6 368.9L833.4 388.9M768 367.2L835 386.9M769.4 365.6L836.5 384.9M770.8 363.9L838.1 382.9M772.2 362.3L839.6 380.9M773.6 360.7L841.1 379M775 359L842.7 377M776.4 357.4L844.2 375M777.8 355.7L845.8 373M779.2 354.1L847.3 371M780.6 352.4L848.9 369" stroke="#d2cbca" stroke-width=".8" fill="none"/><polygon points="850.4,367 851,374 851,387 828.8,396.2 828.8,394.9" fill="#dad4d3" /><polygon points="531,435 762.4,373.8 828.8,394.9 828.8,396.2 585,478" fill="#e7e2e1" /><polygon points="585,478 828.8,396.2 828.8,403.5 585,487.5" fill="#cbc5c5" /><polygon points="531,435 585,478 585,487.5 531,441" fill="#dad4d3" /><path d="M545 446L780 379.500M558 457L797 385M572 467.500L813 390.500" stroke="#d9d3d2" stroke-width="1" fill="none"/><path d="M574 424L632 462M690.500 393L754 421.500" stroke="#c9c2c1" stroke-width="2.400" fill="none"/><path d="M633 408.500L694 441.500M728 383L790 409" stroke="#dad4d3" stroke-width="1" fill="none"/><path d="M686 400.600L697.500 400.600L714.500 405.500L703 413.700L680.400 425.800L671.500 425L683.600 412.800z" fill="#8197be"/><path d="M683.700 377C690 376.500 695 381 695.500 386L700 392.500C703 393 703.500 396 701 396.500L697 399.500L687 401C688 406 685 410 683 413C681 418 677 422 674 424.500C671 427 667 428 664.500 427.500C660 427 655 421 653.600 415C653 408 657 401 660 397C660.500 393 661 390 662.500 387.500C664 381 672 377 683.700 377Z" fill="#f5f4f6"/><path d="M687 401l7 -1l3.500 4l-4 5l-6 1z" fill="#dfe3ee"/><path d="M663.300 379.500L696.700 399" stroke="#b5b2b4" stroke-width="1.300" fill="none"/><path d="M659 399c-3 6-4 13-2 19M664 398c-3 8-3 17 0 25M670 399c-2 8-2 17 1 24M676 400c-1 7-1 14 0 20" stroke="#e3e1e8" stroke-width="1" fill="none"/><path d="M672 380c6 1 12 4 17 9M680 378.500c5 1.500 9 4 13 8" stroke="#e6e4ea" stroke-width=".9" fill="none"/></g></svg>
<div class="a" style="left:521px;top:58px;width:1px;height:568px;background:rgba(255,255,255,.13);"></div>
<div class="a" style="left:521px;top:625px;width:897px;height:1px;background:rgba(255,255,255,.13);"></div>
<div class="a" style="left:523px;top:60px;width:43px;height:224px;background:#191d23;border-radius:4px"></div>
<div class="a" style="left:537px;top:66px;width:16px;height:1px;background:#62666c;"></div>
<div class="a" style="left:537px;top:69px;width:16px;height:1px;background:#62666c;"></div>
<svg style="left:530.5px;top:84.5px" width="14" height="15" viewBox="0 0 14 15" ><path d="M7 .8l6 3.200v7l-6 3.200l-6-3.200v-7z M1 4l6 3.200l6-3.200M7 7.200v7" fill="none" stroke="#e0e0e0" stroke-width="1.100" stroke-linejoin="round"/></svg>
<svg style="left:549px;top:90px" width="8" height="5" viewBox="0 0 8 5" ><polygon points="0,0 8,0 4,5" fill="#c4c4c4"/></svg>
<div class="a" style="left:526px;top:110px;width:37px;height:20px;background:#575757;border-radius:3px 3px 0 0"></div>
<svg style="left:536.7px;top:111.1px" width="17" height="17" viewBox="0 0 15 15" ><path d="M4.300 9.600L1.500 6.400c-.7-.8.400-1.900 1.200-1.100l1.700 1.700l-1.300-5.100c-.3-1.100 1.300-1.500 1.600-.4l1.200 4.100l-.1-4.800c0-1.100 1.600-1.100 1.700 0l.4 4.800l1.100-4.200c.3-1.100 1.900-.7 1.600.4l-.9 4.900l1.700-2.500c.6-.9 1.900-.1 1.400.8l-2.300 4.800c-.6 2.100-1.800 3.300-3.400 3.900h-2.400c-1.400-.6-2.200-1.900-2.800-3.100z" fill="#d0d0d0"/></svg>
<div class="a" style="left:526px;top:131px;width:37px;height:20px;background:#46607c;"></div>
<svg style="left:536.5px;top:133.0px" width="16" height="16" viewBox="0 0 16 16" ><path d="M5.400 3.200l2.600-2.600l2.600 2.600M5.400 12.800l2.600 2.600l2.600-2.600M3.200 5.400l-2.600 2.600l2.600 2.600M12.800 5.400l2.600 2.600l-2.600 2.600" fill="none" stroke="#cdd6e0" stroke-width="1.300"/><path d="M8 1.200v4.600M8 10.200v4.600M1.200 8h4.600M10.200 8h4.600" stroke="#cdd6e0" stroke-width="1.300"/><rect x="7.400" y="7.400" width="1.200" height="1.200" fill="#cdd6e0" opacity=".6"/></svg>
<div class="a" style="left:526px;top:152px;width:37px;height:20px;background:#575757;"></div>
<svg style="left:537.0px;top:154.5px" width="15" height="15" viewBox="0 0 15 15" ><path d="M7 .8a6.700 6.700 0 0 0-4.600 11.800" fill="none" stroke="#d0d0d0" stroke-width="1.100"/><path d="M8 14.200a6.700 6.700 0 0 0 4.600-11.800" fill="none" stroke="#d0d0d0" stroke-width="1.100"/><path d="M.8 13.300h3.400v-3.200" fill="none" stroke="#d0d0d0" stroke-width="1.100"/><path d="M14.200 1.700h-3.400v3.200" fill="none" stroke="#d0d0d0" stroke-width="1.100"/></svg>
<div class="a" style="left:526px;top:173px;width:37px;height:20px;background:#575757;"></div>
<svg style="left:537.5px;top:176.0px" width="14" height="14" viewBox="0 0 14 14" ><rect x=".6" y=".6" width="12.800" height="12.800" fill="none" stroke="#d0d0d0" stroke-width="1.200"/><rect x=".6" y="8.400" width="5" height="5" fill="none" stroke="#d0d0d0" stroke-width="1.200"/><path d="M6 8l4.500-4.500M7 3.200h3.800v3.800" fill="none" stroke="#d0d0d0" stroke-width="1.200"/></svg>
<div class="a" style="left:526px;top:194px;width:37px;height:20px;background:#575757;"></div>
<svg style="left:537.5px;top:197.0px" width="14" height="14" viewBox="0 0 14 14" ><rect x="1.500" y="1.500" width="11" height="11" fill="none" stroke="#d0d0d0" stroke-width="1.100"/><rect x="0" y="0" width="3" height="3" fill="#d0d0d0"/><rect x="11" y="0" width="3" height="3" fill="#d0d0d0"/><rect x="0" y="11" width="3" height="3" fill="#d0d0d0"/><rect x="11" y="11" width="3" height="3" fill="#d0d0d0"/><rect x="5.500" y="5.500" width="3" height="3" fill="none"/></svg>
<div class="a" style="left:526px;top:215px;width:37px;height:20px;background:#575757;border-radius:0 0 3px 3px"></div>
<svg style="left:536.5px;top:217.0px" width="16" height="16" viewBox="0 0 16 16" ><circle cx="8" cy="8" r="5.500" fill="none" stroke="#d0d0d0" stroke-width="1.100"/><path d="M8 3.500v9M3.500 8h9" stroke="#d0d0d0" stroke-width="1.100"/><path d="M8 2.500l1.600 2h-3.200zM8 13.500l1.600-2h-3.200zM2.500 8l2-1.600v3.200zM13.500 8l-2-1.600v3.200z" fill="#d0d0d0"/><path d="M12.500 0.500h3v3zM0.500 15.500h3l-3-3z" fill="#d0d0d0"/></svg>
<div class="a" style="left:526px;top:239px;width:37px;height:20px;background:#575757;border-radius:3px 3px 0 0"></div>
<svg style="left:538.0px;top:242.5px" width="13" height="13" viewBox="0 0 13 13" ><rect x="3" y="3" width="9.400" height="9.400" rx="1.500" fill="none" stroke="#d0d0d0" stroke-width="1.200"/><path d="M3 10.500h-.9a1.500 1.500 0 0 1-1.500-1.500v-6.900a1.500 1.500 0 0 1 1.500-1.500h6.900a1.500 1.500 0 0 1 1.500 1.500v.9M.9 1l2.600 2.500" fill="none" stroke="#d0d0d0" stroke-width="1.200"/></svg>
<svg style="left:558px;top:254px" width="4" height="4"><polygon points="4,0 4,4 0,4" fill="#d0d0d0"/></svg>
<div class="a" style="left:526px;top:260px;width:37px;height:20px;background:#575757;border-radius:0 0 3px 3px"></div>
<svg style="left:537.0px;top:264.5px" width="15" height="11" viewBox="0 0 15 11" ><path d="M7 1.500l5.500 7l-10 1z" fill="#d0d0d0"/><path d="M7 1.500l5.500 7l-10 1zM2.500 9.500c3-1.500 4-5 4.500-8M12.500 8.500c-3.500.5-6.500-1-8-3" fill="none" stroke="#d0d0d0" stroke-width="1"/><circle cx="7" cy="1.500" r="1.400" fill="#d0d0d0"/><circle cx="2.200" cy="9.500" r="1.400" fill="#d0d0d0"/><circle cx="13" cy="8.700" r="1.400" fill="#d0d0d0"/></svg>
<div class="a" style="left:523px;top:598px;width:349px;height:26px;background:#161514;border-radius:4px"></div>
<div class="a" style="left:528px;top:603px;width:1px;height:16px;background:#6a6a6a;"></div>
<div class="a" style="left:531px;top:603px;width:1px;height:16px;background:#6a6a6a;"></div>
<div class="a" style="left:539px;top:601px;width:32px;height:20px;background:#575757;border-radius:3px 0 0 3px"></div>
<svg style="left:548.0px;top:604.0px" width="14" height="14" viewBox="0 0 14 14" ><circle cx="7" cy="7" r="6.200" fill="none" stroke="#d0d0d0" stroke-width="1.300"/><path d="M10.800 3.200l-2.300 5.300l-5.300 2.300l2.300-5.300z" fill="#d0d0d0"/><circle cx="7" cy="7" r="1" fill="#585858"/></svg>
<div class="a" style="left:572px;top:601px;width:32px;height:20px;background:#46607c;"></div>
<svg style="left:580.0px;top:603.0px" width="16" height="16" viewBox="0 0 16 16" ><path d="M5.400 3.200l2.600-2.600l2.600 2.600M5.400 12.800l2.600 2.600l2.600-2.600M3.200 5.400l-2.600 2.600l2.600 2.600M12.800 5.400l2.600 2.600l-2.600 2.600" fill="none" stroke="#cdd6e0" stroke-width="1.300"/><path d="M8 1.200v4.600M8 10.200v4.600M1.200 8h4.600M10.200 8h4.600" stroke="#cdd6e0" stroke-width="1.300"/><rect x="7.400" y="7.400" width="1.200" height="1.200" fill="#cdd6e0" opacity=".6"/></svg>
<div class="a" style="left:605px;top:601px;width:32px;height:20px;background:#575757;"></div>
<svg style="left:613.0px;top:604.0px" width="16" height="14" viewBox="0 0 16 14" ><path d="M1 3.500v-2.500h14v2.500M1 10.500v2.500h14v-2.500" fill="none" stroke="#d0d0d0" stroke-width="1.200"/><path d="M3 3.500l10 8M4 11.500l4-4" stroke="#d0d0d0" stroke-width="1.500"/><path d="M8.500 3l3 3" stroke="#d0d0d0" stroke-width="2.400"/></svg>
<div class="a" style="left:638px;top:601px;width:32px;height:20px;background:#575757;"></div>
<svg style="left:647.0px;top:604.0px" width="14" height="14" viewBox="0 0 14 14" ><rect x="0" y="0" width="12" height="4.500" fill="none" stroke="#d0d0d0" stroke-width="1.100"/><rect x="0" y="0" width="6" height="4.500" fill="#d0d0d0"/><path d="M0 8h13M0 12h13" stroke="#d0d0d0" stroke-width="1.200"/><rect x="3.500" y="6.500" width="2" height="3" fill="#d0d0d0"/><rect x="8.500" y="10.500" width="2" height="3" fill="#d0d0d0"/></svg>
<div class="a" style="left:671px;top:601px;width:32px;height:20px;background:#575757;"></div>
<svg style="left:679.5px;top:604.0px" width="15" height="14" viewBox="0 0 15 14" ><path d="M0 3.500h8M0 6.500h6M2.500 0v8M5.500 0v6" stroke="#d0d0d0" stroke-width="1.100"/><path d="M0.500 13.500l13-13" stroke="#d0d0d0" stroke-width="1.100"/><path d="M8 8v6M10.500 6v8M13 4v10M7 10h7" stroke="#d0d0d0" stroke-width="1.100"/></svg>
<div class="a" style="left:704px;top:601px;width:32px;height:20px;background:#575757;"></div>
<svg style="left:713.0px;top:604.0px" width="14" height="14" viewBox="0 0 14 14" ><circle cx="7" cy="7" r="6.200" fill="none" stroke="#d0d0d0" stroke-width="1.300"/><path d="M10.100 1.630A6.200 6.200 0 1 1 1.630 10.100A6.400 6.400 0 0 0 10.100 1.630z" fill="#d0d0d0"/></svg>
<div class="a" style="left:737px;top:601px;width:32px;height:20px;background:#575757;"></div>
<svg style="left:745.5px;top:604.0px" width="15" height="14" viewBox="0 0 15 14" ><circle cx="3.800" cy="2.500" r="2.400" fill="#d0d0d0"/><path d="M2 9.500l6-3.500l6 3.500l-6 3.800zM5 7.800l6 3.600M11 7.800l-6 3.600" fill="none" stroke="#d0d0d0" stroke-width="1.200"/></svg>
<div class="a" style="left:770px;top:601px;width:32px;height:20px;background:#575757;"></div>
<svg style="left:779.5px;top:604.5px" width="13" height="13" viewBox="0 0 13 13" ><circle cx="5" cy="5" r="4" fill="none" stroke="#d0d0d0" stroke-width="1.400"/><path d="M8 8l4.300 4.300" stroke="#d0d0d0" stroke-width="1.800"/></svg>
<div class="a" style="left:803px;top:601px;width:32px;height:20px;background:#46607c;"></div>
<svg style="left:811.0px;top:603.0px" width="16" height="16" viewBox="0 0 16 16" ><rect x="6.200" y="6.200" width="3.600" height="3.600" fill="none" stroke="#d0d0d0" stroke-width="1.100"/><path d="M8 0.500l2 2.800h-4zM8 15.500l2-2.800h-4zM0.500 8l2.800-2v4zM15.500 8l-2.800-2v4z" fill="#d0d0d0"/><path d="M8 3v3M8 10v3M3 8h3M10 8h3" stroke="#d0d0d0" stroke-width="1.200"/></svg>
<div class="a" style="left:836px;top:601px;width:32px;height:20px;background:#46607c;border-radius:0 3px 3px 0"></div>
<svg style="left:844.5px;top:604.0px" width="15" height="14" viewBox="0 0 15 14" ><rect x="0" y="0" width="9.500" height="7" rx="1" fill="#d0d0d0"/><path d="M9.500 3.500l3.500-2.500v5.500l-3.500-2z" fill="#d0d0d0"/><path d="M5 10.500c1.500-2 3-2.600 4.500-2.600s3 .6 4.500 2.600c-1.500 2-3 2.600-4.500 2.600s-3-.6-4.500-2.600z" fill="#d0d0d0" stroke="#46607c" stroke-width="1"/><circle cx="9.500" cy="10.500" r="1.300" fill="#46607c"/></svg>
<div class="a" style="left:1314px;top:69px;width:16px;height:1px;background:#4c5560;"></div>
<div class="a" style="left:1314px;top:71px;width:16px;height:1px;background:#4c5560;"></div>
<svg style="left:1330px;top:70px" width="80" height="110" viewBox="1330 70 80 110"><ellipse cx="1347" cy="112.500" rx="6" ry="3.500" fill="#e9e9ea" transform="rotate(20 1347 112.500)"/><polygon points="1343,110 1357,116 1346,116.500" fill="#dcdcde"/><polygon points="1357.500,140 1369,140 1362.800,122" fill="#dedede"/><ellipse cx="1363.200" cy="140" rx="5.800" ry="1.800" fill="#cfcfd0"/><polygon points="1343,114.500 1357,117 1345,130" fill="#8c8e92"/><ellipse cx="1342.500" cy="122.500" rx="5.800" ry="8.400" fill="#dfdfe1" transform="rotate(12 1342.500 122.500)"/><circle cx="1375.300" cy="111" r="4" fill="#4d7df0"/><polygon points="1355,109 1372,108.500 1372,121 1356,121.500" fill="#e9eaec"/><polygon points="1355,109 1358,107.700 1373,107.700 1372,108.500" fill="#cfd0d2"/><polygon points="1364,108.800 1372,108.500 1372,121 1365,122" fill="#dcdde0"/><polygon points="1370.400,116.300 1391.500,112.300 1389,127.500" fill="#d9584f"/><ellipse cx="1390.300" cy="120" rx="2.200" ry="7.700" fill="#b9463f" transform="rotate(-9 1390.300 120)"/><polygon points="1356.500,86.500 1369.800,86.500 1362.800,106" fill="#9be04c"/><text x="1362.800" y="82" font-size="10.500" font-weight="bold" fill="#f2f2f2" text-anchor="middle" font-family="Liberation Sans,sans-serif">y</text><text x="1383" y="111" font-size="10.500" font-weight="bold" fill="#f2f2f2" text-anchor="middle" font-family="Liberation Sans,sans-serif">z</text><text x="1398.500" y="123.500" font-size="10.500" font-weight="bold" fill="#f2f2f2" text-anchor="middle" font-family="Liberation Sans,sans-serif">x</text><path d="M1347.500 161.500l-9 4l9 4M1347.500 165.500h-9" fill="none" stroke="#dfe6ee" stroke-opacity=".75" stroke-width="1"/></svg>
<svg style="left:1391px;top:79px" width="8" height="9" viewBox="0 0 8 9" ><rect x="0" y="4" width="8" height="5" fill="#e8e8e8"/><path d="M1.500 4v-1.200a2.300 2.300 0 0 1 4.600 0v.4" fill="none" stroke="#e8e8e8" stroke-width="1.200"/></svg>
<div class="t " style="left:1351.5px;top:157.5px;font-size:12.5px;letter-spacing:-0.164px;color:rgba(225,232,240,.55)">Persp</div>
<div class="a" style="left:1166px;top:444px;width:250px;height:180px;background:#191919;border-radius:4px"></div>
<div class="a" style="left:1171px;top:452px;width:15px;height:1px;background:#5a5a5a;"></div>
<div class="a" style="left:1171px;top:455px;width:15px;height:1px;background:#5a5a5a;"></div>
<svg style="left:1193px;top:450px" width="10" height="9"><polygon points="0,0 10,0 5,9" fill="#6e6e6e"/></svg>
<svg style="left:1208px;top:447px" width="15" height="15" viewBox="0 0 15 15" ><rect x="0" y="0" width="9" height="7" rx="1" fill="#d0d0d0"/><path d="M9 3.500l4-2.500v5.500l-4-2z" fill="#d0d0d0"/><path d="M4 11c1.500-2 3.200-2.800 5-2.800s3.500.8 5 2.800c-1.500 2-3.200 2.800-5 2.800s-3.500-.8-5-2.800z" fill="#fff" stroke="#191919" stroke-width=".8"/><circle cx="9" cy="11" r="1.500" fill="#191919"/></svg>
<div class="t " style="left:1227.5px;top:446.5px;font-size:14.5px;letter-spacing:-0.138px;color:#d0d0d0">Cameras</div>
<div class="a" style="left:1171px;top:465px;width:163px;height:20px;background:#575757;border-radius:3px"></div>
<svg style="left:1175px;top:470.5px" width="13" height="9" viewBox="0 0 13 9" ><rect x="0" y="0" width="9" height="9" rx="1" fill="#68cdf4"/><path d="M9.500 4.500l3.500-3v6z" fill="#68cdf4"/></svg>
<div class="t " style="left:1217.3px;top:467px;font-size:12.5px;letter-spacing:-0.063px;color:#cfcfcf">Main Camera</div>
<svg style="left:1319px;top:473px" width="8" height="5" viewBox="0 0 8 5" ><polygon points="0,0 8,0 4,5" fill="#c4c4c4"/></svg>
<div class="a" style="left:1338px;top:465px;width:32px;height:20px;background:#575757;border-radius:3px"></div>
<svg style="left:1349.0px;top:470.0px" width="10" height="10" viewBox="0 0 10 10" ><circle cx="5" cy="5" r="5" fill="#e0e0e0"/><rect x="4.200" y="4.200" width="1.600" height="3.600" fill="#585858"/><circle cx="5" cy="2.600" r="1" fill="#585858"/></svg>
<div class="a" style="left:1374px;top:465px;width:22px;height:20px;background:#575757;border-radius:3px 0 0 3px"></div>
<svg style="left:1379.5px;top:469.0px" width="12" height="12" viewBox="0 0 12 12" ><path d="M0.600 3.500v-2.900h2.900M8.500 0.600h2.900v2.900M11.400 8.500v2.900h-2.900M3.500 11.400h-2.900v-2.900" fill="none" stroke="#d0d0d0" stroke-width="1.200"/><rect x="3.200" y="3.200" width="5.600" height="5.600" fill="none" stroke="#d0d0d0" stroke-width="1.200"/></svg>
<div class="a" style="left:1397px;top:465px;width:15px;height:20px;background:#575757;border-radius:0 3px 3px 0"></div>
<svg style="left:1400px;top:473px" width="8" height="5" viewBox="0 0 8 5" ><polygon points="0,0 8,0 4,5" fill="#c4c4c4"/></svg>
<div class="a" style="left:1169px;top:488px;width:244px;height:133px;background:#000;"></div>
<svg style="left:1173px;top:488px" width="236" height="133" viewBox="1173 488 236 133"><defs><linearGradient id="sky2" x1="0" y1="0" x2="0" y2="1"><stop offset="0" stop-color="#7b90ae"/><stop offset=".45" stop-color="#8ea3bc"/><stop offset=".8" stop-color="#b3c4cf"/><stop offset=".93" stop-color="#c7d5d8"/><stop offset="1" stop-color="#9aa1a2"/></linearGradient><clipPath id="pc"><rect x="1173" y="488" width="236" height="133"/></clipPath></defs><g clip-path="url(#pc)"><rect x="1173" y="488" width="236" height="44" fill="url(#sky2)"/><rect x="1173" y="532" width="236" height="89" fill="#68625d"/><rect x="1173" y="531" width="236" height="2" fill="#817f7d"/><polygon points="1254,527 1290,527 1290,547 1259,547 1259,535 1254,535" fill="#e3dddc"/><polygon points="1259,536 1325,536 1325,547 1259,547" fill="#dcd6d5"/><path d="M1259 540h66M1259 544h66" stroke="#cbc4c3" stroke-width=".8"/><polygon points="1259.400,547 1325,547 1409,596 1409,621 1173,621 1173,598" fill="#e7e2e1"/><path d="M1282 547L1232 621M1300 547L1306 621M1318 547L1392 621" stroke="#c4bdbc" stroke-width="1.200" fill="none"/><path d="M1240 563h38M1330 563h26" stroke="#cfc8c7" stroke-width=".8" stroke-dasharray="4 2" fill="none"/><path d="M1277 573c2 6 8 10 16 11l-4-14z" fill="#8ea4ca"/><g fill="#a3a3a6"><circle cx="1287.500" cy="533" r="2.200"/><circle cx="1288.500" cy="528.500" r="2.300"/><circle cx="1291" cy="524.500" r="2.300"/><circle cx="1294.500" cy="521.500" r="2.300"/><circle cx="1298.500" cy="519.500" r="2.300"/><circle cx="1303" cy="518.800" r="2.300"/><circle cx="1307.500" cy="519.500" r="2.300"/><circle cx="1311.500" cy="521" r="2.300"/><circle cx="1315" cy="523.500" r="2.300"/><circle cx="1318" cy="527" r="2.300"/><circle cx="1320.500" cy="531" r="2.300"/><circle cx="1322" cy="535.500" r="2.200"/></g><path d="M1290 533a13.800 13.800 0 0 1 13.500-11.500a13.800 13.800 0 0 1 13.500 11.500c1 8 5 17 10 25c3 5 3 9 1 12l-3-1c0 4-3 7-6 8l-2-2c-2 3-5 5-8 5l-2-3c-2 3-6 4-9 3l-1-3c-3 1-6 0-8-3c-4-1-6-5-6-9c-3-7 2-14 4-21c1-4 2-8 2.500-11z" fill="#f7f6f8"/><path d="M1293 540c-3 12-9 22-8 33M1299 538c-2 14-6 26-4 40M1306 537c-1 14-2 28 1 41M1313 539c1 13 3 27 7 37M1318 543c2 10 7 19 8 28" stroke="#dddce3" stroke-width="1" fill="none"/><path d="M1289 578l1 5M1296 580l1 5M1304 581l0 5M1312 580l1 4" stroke="#93a8cc" stroke-width="1.200" fill="none"/></g></svg>
<div class="a" style="left:1418px;top:34px;width:2px;height:927px;background:#111111;"></div>
<div class="a" style="left:1420px;top:34px;width:95px;height:24px;background:#3c3c3c;border-radius:3px 3px 0 0"></div>
<svg style="left:1430.5px;top:41px" width="11" height="11" viewBox="0 0 11 11" ><circle cx="5.500" cy="5.500" r="5.300" fill="#c4c4c4"/><rect x="4.700" y="4.600" width="1.600" height="3.800" fill="#3c3c3c"/><circle cx="5.500" cy="2.900" r="1" fill="#3c3c3c"/></svg>
<div class="t " style="left:1446px;top:38.5px;font-size:12.5px;letter-spacing:0.197px;">Inspector</div>
<svg style="left:1884px;top:41px" width="9" height="10" viewBox="0 0 9 10" ><rect x=".6" y="5.100" width="7.600" height="4.300" fill="none" stroke="#c4c4c4" stroke-width="1.200"/><path d="M2 5v-1.800a2.300 2.300 0 0 1 4.600 0v.5" fill="none" stroke="#c4c4c4" stroke-width="1.200"/></svg>
<svg style="left:1905px;top:41px" width="3" height="11" viewBox="0 0 3 11" ><rect x=".5" y="0" width="2" height="2" fill="#c4c4c4"/><rect x=".5" y="4.300" width="2" height="2" fill="#c4c4c4"/><rect x=".5" y="8.600" width="2" height="2" fill="#c4c4c4"/></svg>
<div class="a" style="left:1420px;top:58px;width:499px;height:903px;background:#383838;"></div>
<div class="a" style="left:0px;top:626px;width:1418px;height:3px;background:#141414;"></div>
<div class="a" style="left:0px;top:629px;width:80px;height:23px;background:#3c3c3c;border-radius:3px 3px 0 0"></div>
<svg style="left:8.3px;top:635.8px" width="13" height="10" viewBox="0 0 13 10" ><path d="M0 .9a.9.9 0 0 1 .9-.9h3.600l1.400 1.500h5.900a.9.9 0 0 1 .9.900v6.700a.9.9 0 0 1-.9.900h-10.900a.9.9 0 0 1-.9-.9z" fill="#c4c4c4"/></svg>
<div class="t " style="left:25px;top:632.5px;font-size:12.5px;letter-spacing:0.132px;">Project</div>
<svg style="left:91px;top:635px" width="11" height="11" viewBox="0 0 11 11" ><rect x="0" y="0" width="11" height="11" rx="1" fill="#c4c4c4"/><path d="M2 3h7M2 5.500h7M2 8h7" stroke="#141414" stroke-width="1"/></svg>
<div class="t " style="left:107px;top:632.5px;font-size:12.5px;letter-spacing:0.021px;">Console</div>
<svg style="left:178px;top:635px" width="15" height="11" viewBox="0 0 15 11" ><circle cx="2" cy="2.200" r="1.900" fill="#c4c4c4"/><circle cx="12.200" cy="2.200" r="1.500" fill="none" stroke="#c4c4c4" stroke-width="1.100"/><circle cx="12.200" cy="8.300" r="1.500" fill="none" stroke="#c4c4c4" stroke-width="1.100"/><path d="M3.500 2.200h7.200M5.500 2.200c2.200 0 1.200 6.100 5.200 6.100" fill="none" stroke="#c4c4c4" stroke-width="1.100"/></svg>
<div class="t " style="left:195px;top:632.5px;font-size:12.5px;letter-spacing:0.129px;">Unity Version Control</div>
<svg style="left:341px;top:635px" width="12" height="12" viewBox="0 0 12 12" ><circle cx="6" cy="6" r="6" fill="#c4c4c4"/><path d="M6 2.500v3.800h3.200" fill="none" stroke="#141414" stroke-width="1.400"/></svg>
<div class="t " style="left:357px;top:632.5px;font-size:12.5px;letter-spacing:0.138px;">Animation</div>
<svg style="left:1383px;top:635px" width="9" height="10" viewBox="0 0 9 10" ><rect x=".6" y="5.100" width="7.600" height="4.300" fill="none" stroke="#c4c4c4" stroke-width="1.200"/><path d="M2 5v-1.800a2.300 2.300 0 0 1 4.600 0v.5" fill="none" stroke="#c4c4c4" stroke-width="1.200"/></svg>
<svg style="left:1404px;top:635px" width="3" height="11" viewBox="0 0 3 11" ><rect x=".5" y="0" width="2" height="2" fill="#c4c4c4"/><rect x=".5" y="4.300" width="2" height="2" fill="#c4c4c4"/><rect x=".5" y="8.600" width="2" height="2" fill="#c4c4c4"/></svg>
<div class="a" style="left:0px;top:652px;width:1418px;height:20px;background:#3c3c3c;"></div>
<div class="a" style="left:26px;top:652px;width:1px;height:20px;background:#2a2a2a;"></div>
<svg style="left:7px;top:656px" width="12" height="12" viewBox="0 0 12 12" ><path d="M6 0v12M0 6h12" stroke="#dcdcdc" stroke-width="1.600"/></svg>
<svg style="left:16px;top:664px" width="5" height="3" viewBox="0 0 5 3" ><polygon points="0,0 5,0 2.5,3" fill="#c4c4c4"/></svg>
<div class="a" style="left:951px;top:654px;width:317px;height:16px;background:#2a2a2a;border:1px solid #212121;border-radius:3px"></div>
<svg style="left:955px;top:658px" width="8" height="9" viewBox="0 0 8 9" ><circle cx="3.300" cy="3.300" r="2.500" fill="none" stroke="#b0b0b0" stroke-width="1.300"/><path d="M5.200 5.200l2.500 2.800" stroke="#b0b0b0" stroke-width="1.500"/></svg>
<svg style="left:1253px;top:656px" width="13" height="12" viewBox="0 0 13 12" ><path d="M3.500 4v-3h9v8.500h-3.500" fill="none" stroke="#c4c4c4" stroke-width="1.100"/><rect x=".6" y="7" width="4" height="4.200" fill="none" stroke="#c4c4c4" stroke-width="1.100"/><path d="M4.500 7.500l5-4.500M6.500 2.800h3.200v3.200" fill="none" stroke="#c4c4c4" stroke-width="1.100"/></svg>
<div class="a" style="left:1272px;top:652px;width:1px;height:20px;background:#2e2e2e;"></div>
<div class="a" style="left:1298px;top:652px;width:1px;height:20px;background:#2e2e2e;"></div>
<div class="a" style="left:1324px;top:652px;width:1px;height:20px;background:#2e2e2e;"></div>
<div class="a" style="left:1350px;top:652px;width:1px;height:20px;background:#2e2e2e;"></div>
<div class="a" style="left:1376px;top:652px;width:1px;height:20px;background:#2e2e2e;"></div>
<svg style="left:1278px;top:655px" width="14" height="14" viewBox="0 0 14 14" ><rect x="2" y="0" width="6" height="6" fill="#c4c4c4"/><circle cx="4" cy="10" r="3.600" fill="#c4c4c4"/><polygon points="9.500,3.500 13.500,10.500 6.500,10.500" fill="#c4c4c4"/></svg>
<svg style="left:1304px;top:656px" width="13" height="12" viewBox="0 0 13 12" ><path d="M5.500 1h6.500v6.500l-5 4.500l-6.500-6.500z" fill="#c4c4c4" transform="rotate(0)"/><circle cx="9.600" cy="3.400" r="1.100" fill="#3c3c3c"/></svg>
<svg style="left:1329px;top:654px" width="14" height="14" viewBox="0 0 14 14" ><circle cx="7" cy="7" r="6.800" fill="#d8d8d8"/><rect x="6.100" y="2.800" width="1.800" height="5.400" fill="#3c3c3c"/><circle cx="7" cy="10.400" r="1.100" fill="#3c3c3c"/></svg>
<svg style="left:1356px;top:655px" width="13" height="13" viewBox="0 0 13 13" ><polygon points="6.500,0.500 8.300,4.700 12.800,5.100 9.400,8.100 10.400,12.500 6.500,10.200 2.600,12.500 3.600,8.100 0.200,5.100 4.700,4.700" fill="#bdbdbd"/></svg>
<svg style="left:1381px;top:657px" width="16" height="9" viewBox="0 0 16 9" ><path d="M0.500 4.500c2-3 4.500-4 7.500-4s5.500 1 7.500 4c-2 3-4.500 4-7.500 4s-5.500-1-7.500-4z" fill="none" stroke="#6e6e6e" stroke-width="1.100"/><circle cx="8" cy="4.500" r="2.600" fill="#6e6e6e"/></svg>
<div class="t " style="left:1399px;top:654px;font-size:13px;letter-spacing:-0.469px;color:#8a8a8a">25</div>
<div class="a" style="left:0px;top:672px;width:1418px;height:1px;background:#232323;"></div>
<div class="a" style="left:0px;top:673px;width:199px;height:288px;background:#383838;"></div>
<div class="a" style="left:199px;top:673px;width:1px;height:288px;background:#232323;"></div>
<div class="a" style="left:200px;top:673px;width:1218px;height:20px;background:#3e3e3e;"></div>
<div class="a" style="left:200px;top:693px;width:1218px;height:1px;background:#2c2c2c;"></div>
<div class="a" style="left:200px;top:694px;width:1218px;height:246px;background:#333333;"></div>
<div class="a" style="left:200px;top:940px;width:1218px;height:21px;background:#404040;"></div>
<svg style="left:4px;top:676px" width="10" height="9" viewBox="0 0 10 9" ><polygon points="0,0 9.500,0 4.750,9" fill="#6a6a6a"/></svg>
<svg style="left:17px;top:673.5px" width="13" height="13" viewBox="0 0 13 13" ><polygon points="6.500,0.500 8.300,4.700 12.800,5.100 9.400,8.100 10.400,12.500 6.500,10.200 2.600,12.500 3.600,8.100 0.200,5.100 4.700,4.700" fill="#bdbdbd"/></svg>
<div class="t b" style="left:34px;top:672.5px;font-size:12.5px;letter-spacing:-0.287px;">Favorites</div>
<svg style="left:31.7px;top:691.0px" width="12" height="12" viewBox="0 0 12 12" ><circle cx="4.800" cy="4.800" r="3.900" fill="none" stroke="#c4c4c4" stroke-width="1.300"/><path d="M7.600 7.600l3.800 3.900" stroke="#c4c4c4" stroke-width="1.600"/></svg>
<div class="t " style="left:48px;top:688.5px;font-size:12.5px;letter-spacing:0.052px;">All Materials</div>
<svg style="left:31.7px;top:707.0px" width="12" height="12" viewBox="0 0 12 12" ><circle cx="4.800" cy="4.800" r="3.900" fill="none" stroke="#c4c4c4" stroke-width="1.300"/><path d="M7.600 7.600l3.800 3.900" stroke="#c4c4c4" stroke-width="1.600"/></svg>
<div class="t " style="left:48px;top:704.5px;font-size:12.5px;letter-spacing:0.036px;">All Models</div>
<svg style="left:31.7px;top:723.0px" width="12" height="12" viewBox="0 0 12 12" ><circle cx="4.800" cy="4.800" r="3.900" fill="none" stroke="#c4c4c4" stroke-width="1.300"/><path d="M7.600 7.600l3.800 3.900" stroke="#c4c4c4" stroke-width="1.600"/></svg>
<div class="t " style="left:48px;top:720.5px;font-size:12.5px;letter-spacing:-0.015px;">All Prefabs</div>
<div class="a" style="left:0px;top:752px;width:199px;height:16px;background:#4d4d4d;"></div>
<svg style="left:5px;top:755px" width="8" height="10" viewBox="0 0 8 10" ><polygon points="0,0 8,5 0,10" fill="#6a6a6a"/></svg>
<svg style="left:17.7px;top:754.8px" width="13" height="10" viewBox="0 0 13 10" ><path d="M0 .9a.9.9 0 0 1 .9-.9h3.600l1.400 1.500h5.900a.9.9 0 0 1 .9.900v6.700a.9.9 0 0 1-.9.900h-10.900a.9.9 0 0 1-.9-.9z" fill="#c4c4c4"/></svg>
<div class="t b" style="left:35px;top:751.5px;font-size:12.5px;letter-spacing:-0.260px;">Assets</div>
<svg style="left:5px;top:771px" width="8" height="10" viewBox="0 0 8 10" ><polygon points="0,0 8,5 0,10" fill="#6a6a6a"/></svg>
<svg style="left:17.7px;top:770.8px" width="13" height="10" viewBox="0 0 13 10" ><path d="M0 .9a.9.9 0 0 1 .9-.9h3.600l1.400 1.500h5.900a.9.9 0 0 1 .9.900v6.700a.9.9 0 0 1-.9.900h-10.900a.9.9 0 0 1-.9-.9z" fill="#c4c4c4"/></svg>
<div class="t b" style="left:35px;top:767.5px;font-size:12.5px;letter-spacing:-0.241px;">Packages</div>
<div class="t b" style="left:204px;top:674.5px;font-size:12.5px;letter-spacing:-0.260px;">Assets</div>
<svg style="left:217.7px;top:697.3px" width="13" height="10" viewBox="0 0 13 10" ><path d="M0 .9a.9.9 0 0 1 .9-.9h3.600l1.400 1.500h5.900a.9.9 0 0 1 .9.900v6.700a.9.9 0 0 1-.9.900h-10.900a.9.9 0 0 1-.9-.9z" fill="#c4c4c4"/></svg>
<div class="t " style="left:234px;top:694.5px;font-size:12.5px;letter-spacing:-0.219px;">_Recovery</div>
<svg style="left:217.7px;top:713.3px" width="13" height="10" viewBox="0 0 13 10" ><path d="M0 .9a.9.9 0 0 1 .9-.9h3.600l1.400 1.500h5.900a.9.9 0 0 1 .9.900v6.700a.9.9 0 0 1-.9.900h-10.900a.9.9 0 0 1-.9-.9z" fill="#c4c4c4"/></svg>
<div class="t " style="left:234px;top:710.5px;font-size:12.5px;letter-spacing:-0.081px;">Scenes</div>
<svg style="left:217.7px;top:729.3px" width="13" height="10" viewBox="0 0 13 10" ><path d="M0 .9a.9.9 0 0 1 .9-.9h3.600l1.400 1.500h5.900a.9.9 0 0 1 .9.900v6.700a.9.9 0 0 1-.9.900h-10.900a.9.9 0 0 1-.9-.9z" fill="#c4c4c4"/></svg>
<div class="t " style="left:234px;top:726.5px;font-size:12.5px;letter-spacing:0.218px;">Settings</div>
<svg style="left:217.7px;top:745.3px" width="13" height="10" viewBox="0 0 13 10" ><path d="M0 .9a.9.9 0 0 1 .9-.9h3.600l1.400 1.500h5.900a.9.9 0 0 1 .9.900v6.700a.9.9 0 0 1-.9.900h-10.900a.9.9 0 0 1-.9-.9z" fill="#c4c4c4"/></svg>
<div class="t " style="left:234px;top:742.5px;font-size:12.5px;letter-spacing:0.139px;">StarterAssets</div>
<svg style="left:217.7px;top:761.3px" width="13" height="10" viewBox="0 0 13 10" ><path d="M0 .9a.9.9 0 0 1 .9-.9h3.600l1.400 1.500h5.900a.9.9 0 0 1 .9.900v6.700a.9.9 0 0 1-.9.900h-10.900a.9.9 0 0 1-.9-.9z" fill="#c4c4c4"/></svg>
<div class="t " style="left:234px;top:758.5px;font-size:12.5px;letter-spacing:0.084px;">TutorialInfo</div>
<svg style="left:203px;top:777.5px" width="8" height="10" viewBox="0 0 8 10" ><polygon points="0,0 8,5 0,10" fill="#6a6a6a"/></svg>
<svg style="left:217px;top:775.0px" width="14" height="15" viewBox="0 0 14 15" ><polygon points="7,0.500 13.600,3.600 7,6.900 0.400,3.600" fill="#9bdcfb"/><polygon points="3.300,2.100 5.300,1.200 11.900,4.500 9.900,5.500" fill="#f4f8fb"/><polygon points="0.400,3.600 7,6.900 7,14.600 0.400,11.200" fill="#dde1e5"/><polygon points="13.600,3.600 7,6.900 7,14.600 13.600,11.200" fill="#6cc6f4"/><polygon points="2.600,5.200 4.600,6.200 4.600,9 3.600,8 2.600,8.300" fill="#6d7379"/></svg>
<div class="t " style="left:234px;top:774.5px;font-size:12.5px;letter-spacing:0.057px;">3D Chibi Serena Idle Temporary</div>
<svg style="left:203px;top:793.5px" width="8" height="10" viewBox="0 0 8 10" ><polygon points="0,0 8,5 0,10" fill="#6a6a6a"/></svg>
<svg style="left:217px;top:791.0px" width="14" height="15" viewBox="0 0 14 15" ><polygon points="7,0.500 13.600,3.600 7,6.900 0.400,3.600" fill="#9bdcfb"/><polygon points="3.300,2.100 5.300,1.200 11.900,4.500 9.900,5.500" fill="#f4f8fb"/><polygon points="0.400,3.600 7,6.900 7,14.600 0.400,11.200" fill="#dde1e5"/><polygon points="13.600,3.600 7,6.900 7,14.600 13.600,11.200" fill="#6cc6f4"/><polygon points="2.600,5.200 4.600,6.200 4.600,9 3.600,8 2.600,8.300" fill="#6d7379"/></svg>
<div class="t " style="left:234px;top:790.5px;font-size:12.5px;letter-spacing:-0.046px;">3D Chibi Serena Modelling_Run</div>
<svg style="left:217px;top:807.0px" width="14" height="15" viewBox="0 0 14 15" ><polygon points="8.500,2.500 13.800,11.500 3.200,11.500" fill="#6ee7d2"/><path d="M0.500 5.500h4M1 7.500h3M0.500 9.500h2.500" stroke="#d8d8d8" stroke-width="1"/></svg>
<div class="t " style="left:234px;top:806.5px;font-size:12.5px;letter-spacing:0.212px;">Animation prototype</div>
<svg style="left:217px;top:823.0px" width="13" height="15" viewBox="0 0 13 15" ><path d="M0.500 0.500h8.500l3.500 3.500v10.500h-12z" fill="#e8e8e8"/><path d="M9 .5v3.500h3.500z" fill="#bdbdbd"/><text x="6.300" y="12.300" font-size="11.500" font-weight="bold" text-anchor="middle" fill="#21702a" font-family="Liberation Sans,sans-serif">#</text></svg>
<div class="t " style="left:234px;top:822.5px;font-size:12.5px;letter-spacing:-0.154px;">Camera</div>
<svg style="left:217px;top:839.0px" width="13" height="15" viewBox="0 0 13 15" ><path d="M0.500 0.500h8.500l3.500 3.500v10.500h-12z" fill="#e8e8e8"/><path d="M9 .5v3.500h3.500z" fill="#bdbdbd"/><text x="6.300" y="12.300" font-size="11.500" font-weight="bold" text-anchor="middle" fill="#21702a" font-family="Liberation Sans,sans-serif">#</text></svg>
<div class="t " style="left:234px;top:838.5px;font-size:12.5px;letter-spacing:-0.037px;">CameraMove</div>
<svg style="left:217px;top:855.0px" width="14" height="15" viewBox="0 0 14 15" ><rect x="1" y="1.500" width="5" height="5" fill="#bdbdbd"/><rect x="8.500" y="8.500" width="5" height="5" fill="#bdbdbd"/><path d="M6 4h5.500v4.500M8.500 11h-5.500v-4.500" fill="none" stroke="#6ee7d2" stroke-width="1.200"/></svg>
<div class="t " style="left:234px;top:854.5px;font-size:12.5px;letter-spacing:0.051px;">Cube (2)</div>
<svg style="left:203px;top:873.5px" width="8" height="10" viewBox="0 0 8 10" ><polygon points="0,0 8,5 0,10" fill="#6a6a6a"/></svg>
<svg style="left:217px;top:871.0px" width="14" height="15" viewBox="0 0 14 15" ><path d="M0.500 2l4.500 1.500v11l-4.500-1.500z" fill="#e6e6e6"/><path d="M5 3.500l4.500-1.500v11l-4.500 1.500z" fill="#bcbcbc"/><path d="M9.500 2l4 1.500v11l-4-1.500z" fill="#e6e6e6"/><polygon points="11.500,5 8,10 10.500,10 9.500,14 13.500,8.500 11,8.500" fill="#3fa0e8"/></svg>
<div class="t " style="left:234px;top:870.5px;font-size:12.5px;letter-spacing:0.071px;">InputSystem_Actions</div>
<svg style="left:217px;top:887.0px" width="13" height="15" viewBox="0 0 13 15" ><path d="M0.500 0.500h8.500l3.500 3.500v10.500h-12z" fill="#e8e8e8"/><path d="M9 .5v3.500h3.500z" fill="#bdbdbd"/><text x="6.300" y="12.300" font-size="11.500" font-weight="bold" text-anchor="middle" fill="#21702a" font-family="Liberation Sans,sans-serif">#</text></svg>
<div class="t " style="left:234px;top:886.5px;font-size:12.5px;letter-spacing:0.028px;">PlayerScript</div>
<svg style="left:217px;top:903.0px" width="15" height="15" viewBox="0 0 15 15" ><path d="M6 0.800l5 2.700v5.500l-5 2.700l-5-2.700v-5.500z M1 3.500l5 2.700l5-2.700M6 6.200v5.500" fill="none" stroke="#7cc4f0" stroke-width="1.100" stroke-linejoin="round"/><rect x="7.500" y="8" width="7" height="7" fill="#333"/><text x="11" y="14" font-size="7.500" font-weight="bold" text-anchor="middle" fill="#f0643c" font-family="Liberation Sans,sans-serif">{}</text></svg>
<div class="t " style="left:234px;top:902.5px;font-size:12.5px;letter-spacing:-0.250px;">Readme</div>
<div class="a" style="left:1356px;top:950px;width:46px;height:2px;background:#636363;border-radius:1px"></div>
<div class="a" style="left:1347px;top:946px;width:10px;height:10px;background:#a0a0a0;border-radius:5px"></div>
<div class="a" style="left:0px;top:961px;width:1919px;height:23px;background:#141414;"></div>
<svg style="left:3px;top:965px" width="13" height="14" viewBox="0 0 13 14" ><path d="M6.500 0.500a6 6 0 1 1-3.600 10.800l-2.400 1.700l.8-3.300a6 6 0 0 1 5.200-9.200z" fill="#e8e8e8"/><rect x="5.600" y="2.600" width="1.800" height="5" fill="#141414"/><circle cx="6.500" cy="9.600" r="1.100" fill="#141414"/></svg>
<div class="t " style="left:20px;top:964.5px;font-size:12.5px;letter-spacing:0.139px;">Couldn't find a readme</div>
<div class="a" style="left:1841px;top:963px;width:1px;height:19px;background:#232323;"></div>
<div class="a" style="left:1867px;top:963px;width:1px;height:19px;background:#232323;"></div>
<div class="a" style="left:1893px;top:963px;width:1px;height:19px;background:#232323;"></div>
<svg style="left:1846.5px;top:965.5px" width="15" height="15" viewBox="0 0 15 15" ><ellipse cx="7.500" cy="8.800" rx="4.200" ry="5" fill="#c4c4c4"/><circle cx="7.500" cy="3.600" r="2.300" fill="#c4c4c4"/><path d="M5.500 1.800l-1.500-1.500M9.500 1.800l1.500-1.500M1 6l3 2M14 6l-3 2M.5 10.500h3M14.500 10.500h-3M1.500 14.500l2.500-2.200M13.500 14.500l-2.500-2.200" stroke="#c4c4c4" stroke-width="1.200" fill="none"/><path d="M1 .8l13 13.700" stroke="#141414" stroke-width="2.600"/><path d="M1.600 .6l13 13.700" stroke="#c4c4c4" stroke-width="1.100"/></svg>
<svg style="left:1872.5px;top:965.5px" width="15" height="15" viewBox="0 0 15 15" ><ellipse cx="7.500" cy="3.300" rx="6" ry="2.600" fill="#c4c4c4"/><path d="M1.500 5c0 3.200 12 3.200 12 0v2.800c0 3.200-12 3.200-12 0zM1.500 9.400c0 3.200 12 3.200 12 0v2.800c0 3.200-12 3.200-12 0z" fill="#c4c4c4"/><path d="M.8 1l13.500 13.500" stroke="#141414" stroke-width="2.600"/><path d="M1.400 .8l13.500 13.500" stroke="#c4c4c4" stroke-width="1.100"/></svg>
<svg style="left:1898.7px;top:965.5px" width="15" height="15" viewBox="0 0 15 15" ><circle cx="7.500" cy="7.500" r="6.600" fill="none" stroke="#c4c4c4" stroke-width="1.200"/><path d="M4.500 7.700l2.200 2.200l4-4.300" fill="none" stroke="#c4c4c4" stroke-width="1.500"/></svg>
<div class="a" style="left:0px;top:983px;width:94px;height:1px;background:#3f8f2b;"></div>
<div class="a" style="left:94px;top:983px;width:1816px;height:1px;background:#2f6fd6;"></div>
<div class="a" style="left:1910px;top:983px;width:9px;height:1px;background:#444;"></div>
</body></html>
